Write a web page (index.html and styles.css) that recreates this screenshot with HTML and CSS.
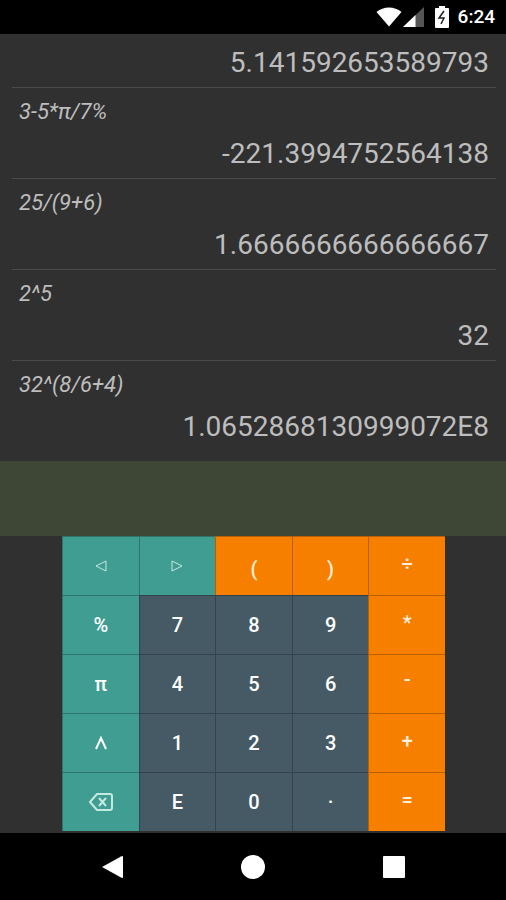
FILE: index.html
```html
<!DOCTYPE html>
<html lang="en">
<head>
<meta charset="utf-8">
<meta name="viewport" content="width=device-width, initial-scale=1">
<title>Calculator</title>
<link rel="stylesheet" href="styles.css">
</head>
<body>
<header class="status">
  <svg class="wifi" viewBox="0 0 26 20" width="26" height="20" aria-hidden="true"><path d="M0.500 5C7.500-1 18.500-1 25.500 5L13 19.500Z" fill="#fff"/></svg>
  <svg class="signal" viewBox="0 0 22 20" width="22" height="20" aria-hidden="true"><path d="M0 20L21 0V20Z" fill="#555"/><path d="M0 20L12.500 8V20Z" fill="#fff"/></svg>
  <svg class="battery" viewBox="0 0 14 22" width="14" height="22" aria-hidden="true"><path d="M4 0H10V2H13Q14 2 14 3V21Q14 22 13 22H1Q0 22 0 21V3Q0 2 1 2H4Z" fill="#fff"/><path d="M9 5L4 12H9L6 18" fill="none" stroke="#222" stroke-width="1.500"/></svg>
  <time class="clock">6:24</time>
</header>
<main class="calculator">
  <section class="history" aria-label="History">
    <div class="entry"><output class="result">5.141592653589793</output></div>
    <div class="entry"><p class="expression">3-5*π/7%</p><output class="result">-221.3994752564138</output></div>
    <div class="entry"><p class="expression">25/(9+6)</p><output class="result">1.6666666666666667</output></div>
    <div class="entry"><p class="expression">2^5</p><output class="result">32</output></div>
    <div class="entry"><p class="expression">32^(8/6+4)</p><output class="result">1.0652868130999072E8</output></div>
  </section>
  <input class="display" type="text" aria-label="Expression">
  <div class="keypad">
    <button class="key teal" aria-label="Move left"><svg class="arrow" viewBox="0 0 14 14" width="14" height="14"><path d="M12 2V12L2 7Z"/></svg></button>
    <button class="key teal" aria-label="Move right"><svg class="arrow" viewBox="0 0 14 14" width="14" height="14"><path d="M2 2V12L12 7Z"/></svg></button>
    <button class="key orange paren">(</button>
    <button class="key orange paren">)</button>
    <button class="key orange operator">÷</button>
    <button class="key teal">%</button>
    <button class="key">7</button>
    <button class="key">8</button>
    <button class="key">9</button>
    <button class="key orange operator">*</button>
    <button class="key teal">π</button>
    <button class="key">4</button>
    <button class="key">5</button>
    <button class="key">6</button>
    <button class="key orange operator minus">-</button>
    <button class="key teal" aria-label="Power"><svg class="caret" viewBox="0 0 14 14" width="14" height="14"><path d="M2 13L7 2L12 13"/></svg></button>
    <button class="key">1</button>
    <button class="key">2</button>
    <button class="key">3</button>
    <button class="key orange operator">+</button>
    <button class="key teal" aria-label="Backspace"><svg class="erase" viewBox="0 0 24 18" width="24" height="18"><path d="M8 1H21Q23 1 23 3V15Q23 17 21 17H8L1 9Z"/><path d="M10 5L17 13M17 5L10 13"/></svg></button>
    <button class="key">E</button>
    <button class="key">0</button>
    <button class="key">·</button>
    <button class="key orange operator">=</button>
  </div>
</main>
<nav class="navbar">
  <button class="nav-button" aria-label="Back"><svg viewBox="0 0 24 24" width="24" height="24"><path d="M2 12L21 1.500Q23 0.500 23 2V22Q23 23.500 21 22.500Z"/></svg></button>
  <button class="nav-button" aria-label="Home"><svg viewBox="0 0 24 24" width="24" height="24"><circle cx="12" cy="12" r="12"/></svg></button>
  <button class="nav-button" aria-label="Recent apps"><svg viewBox="0 0 24 24" width="24" height="24"><rect x="1" y="1" width="22" height="22" rx="1"/></svg></button>
</nav>
</body>
</html>
```

FILE: styles.css
```css
* {
  box-sizing: border-box;
}

body {
  margin: 0;
  min-height: 100vh;
  display: flex;
  flex-direction: column;
  background: #000;
  color: #bdbdbd;
  font-family: Roboto, sans-serif;
}

.status {
  display: flex;
  align-items: center;
  justify-content: flex-end;
  height: 34px;
  padding: 0 11px 0 0;
  color: #fff;
}

.signal {
  margin-left: 1px;
}

.battery {
  margin-left: 10px;
}

.clock {
  margin-left: 9px;
  font-size: 19px;
  font-weight: 500;
  line-height: 36px;
}

.calculator {
  flex: 1;
  display: flex;
  flex-direction: column;
  background: #303030;
}

.history {
  flex: 1;
  display: flex;
  flex-direction: column;
  padding: 0 10px 0 12px;
}

.entry {
  display: flex;
  flex-direction: column;
  padding: 8px 7px 7px;
  border-bottom: 1px solid #4a4a4a;
}

.entry:first-child {
  padding-top: 12px;
}

.entry:last-child {
  border-bottom: 0;
}

.expression {
  margin: 0 0 9px;
  font-size: 22px;
  font-style: italic;
  line-height: 32px;
}

.result {
  font-size: 28px;
  line-height: 34px;
  text-align: right;
}

.display {
  width: 100%;
  height: 75px;
  padding: 0 18px;
  border: 0;
  outline: 0;
  background: #3e4736;
  color: #fff;
  font: 28px Roboto, sans-serif;
}

.keypad {
  display: grid;
  grid-template-columns: repeat(5, 1fr);
  grid-auto-rows: 59px;
  padding: 0 61px 2px 62px;
}

.key {
  display: flex;
  align-items: center;
  justify-content: center;
  padding: 0;
  border: 0 solid rgba(0, 0, 0, 0.25);
  border-width: 1px 0 0 1px;
  background: #455a64;
  color: #fff;
  font: 500 20px Roboto, sans-serif;
}

.teal {
  background: #409d91;
}

.orange {
  background: #f77f00;
}

.operator {
  padding-bottom: 4px;
  color: #fff0df;
}

.minus {
  padding-bottom: 10px;
}

.paren {
  padding-top: 6px;
  color: #fff0df;
}

.key svg {
  fill: none;
  stroke: #c4e8e2;
  stroke-width: 2;
}

.key .arrow {
  stroke-width: 1;
}

.key .caret {
  stroke: #fff;
}

.navbar {
  display: flex;
  justify-content: space-between;
  height: 67px;
  padding: 0 100px;
}

.nav-button {
  display: flex;
  align-items: center;
  padding: 0;
  border: 0;
  background: none;
  fill: #fff;
}
```
